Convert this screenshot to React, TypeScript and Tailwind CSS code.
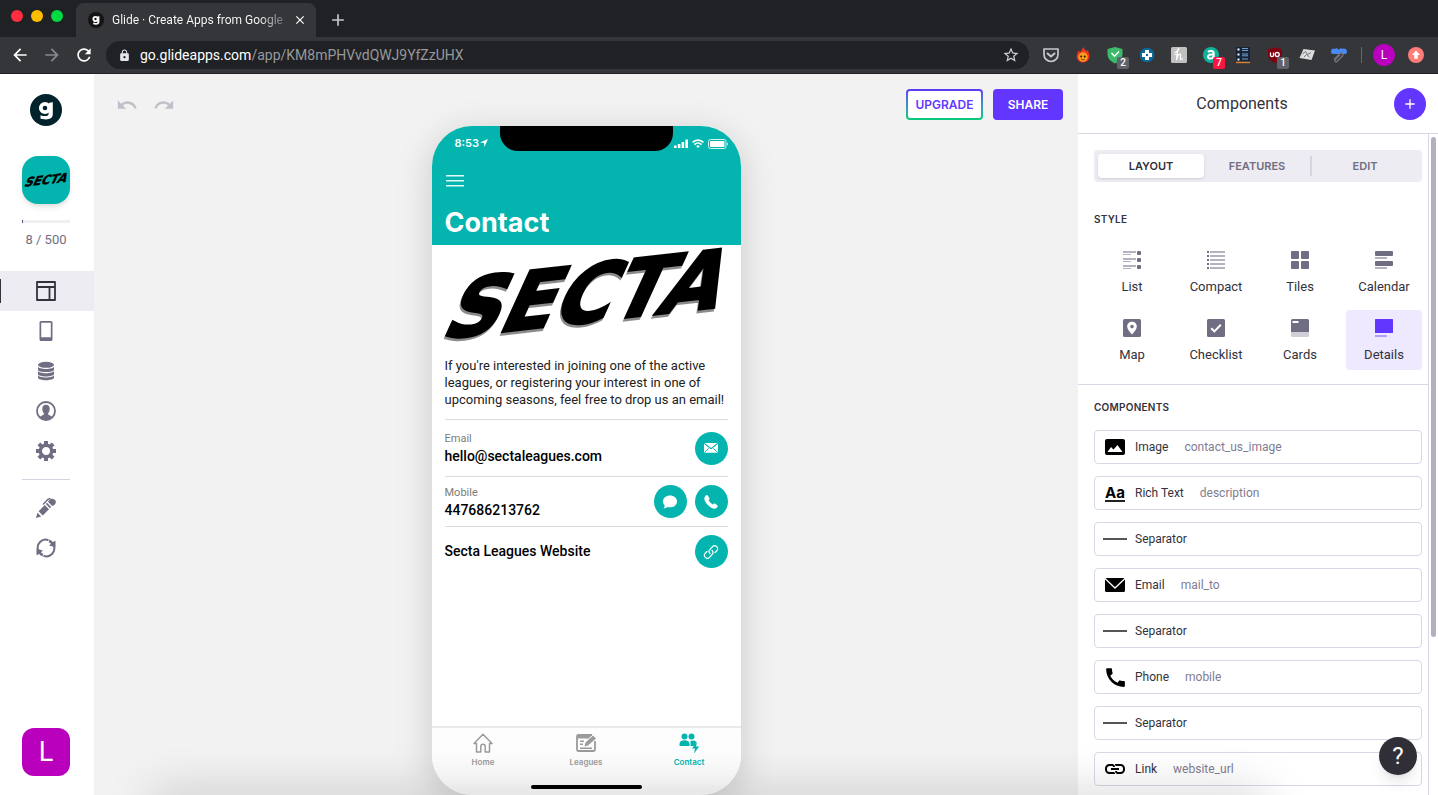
import type { ReactNode } from "react";
import {
  MdArrowBack,
  MdArrowForward,
  MdRefresh,
  MdLock,
  MdStarBorder,
  MdUndo,
  MdRedo,
  MdCall,
  MdClose,
  MdAdd,
} from "react-icons/md";

function SectaLogo({ className, shadow = false }: { className: string; shadow?: boolean }) {
  return (
    <svg viewBox="0 0 284 92" className={`overflow-visible ${className}`} role="img" aria-label="Secta">
      <g
        fontFamily="'DejaVu Sans', sans-serif"
        fontWeight="700"
        fontSize="78"
        strokeWidth="2.500"
        transform="translate(-4 89) rotate(-6.500) skewX(-31)"
      >
        {shadow && (
          <text x="0" y="2.500" fill="#000" stroke="#000" opacity="0.45">
            SECTA
          </text>
        )}
        <text x="0" y="0" fill="#000" stroke="#000">
          SECTA
        </text>
      </g>
    </svg>
  );
}

function GlideMark({ className, fill }: { className: string; fill: string }) {
  return (
    <svg viewBox="0 0 32 32" className={className} role="img" aria-label="Glide">
      <circle cx="16" cy="16" r="16" fill={fill} />
      <circle cx="15" cy="14" r="4.200" fill="none" stroke="#fff" strokeWidth="3.800" />
      <path d="M18.600 10.500c.2-1.600 1.300-2.300 4.200-2.200v11.700c0 3.800-2.700 5.400-7 5.400-2 0-3.900-.3-5.300-.9v-3.300c1.500.6 3.200.9 4.800.9 2.200 0 3.300-.6 3.300-2.300z" fill="#fff" />
    </svg>
  );
}

function Extension({ label, badge, badgeClass, children }: { label: string; badge?: string; badgeClass?: string; children: ReactNode }) {
  return (
    <button aria-label={label} className="relative flex size-5 items-center justify-center">
      <svg viewBox="0 0 18 18" className="size-[18px]">{children}</svg>
      {badge && (
        <span className={`absolute top-3 left-3 flex size-3 items-center justify-center rounded-xs text-[10px] leading-none font-medium text-white ${badgeClass}`}>
          {badge}
        </span>
      )}
    </button>
  );
}

function BrowserBar() {
  return (
    <header className="shrink-0 border-b border-[#202124] bg-[#35363a]">
      <div className="flex h-[37px] items-end bg-[#202124]">
        <div className="flex h-full w-[76px] gap-2 pt-[10px] pl-[11px]">
          <button aria-label="Close window" className="size-3 rounded-full bg-[#ff2d3f]" />
          <button aria-label="Minimise window" className="size-3 rounded-full bg-[#ffbd00]" />
          <button aria-label="Zoom window" className="size-3 rounded-full bg-[#00db41]" />
        </div>
        <div className="flex h-[34px] w-60 items-center rounded-t-lg bg-[#35363a] pr-2 pl-3">
          <GlideMark className="size-4 shrink-0" fill="#141414" />
          <span className="ml-2 min-w-0 flex-1 bg-linear-to-r from-white from-85% to-[#6c6d70] bg-clip-text text-[12px] whitespace-nowrap text-transparent">
            Glide · Create Apps from Google
          </span>
          <button aria-label="Close tab" className="ml-2 flex size-4 items-center justify-center text-white">
            <MdClose className="size-[14px]" />
          </button>
        </div>
        <button aria-label="New tab" className="ml-3 flex h-[34px] w-5 items-center justify-center text-[#c4c7cb]">
          <MdAdd className="size-5" />
        </button>
      </div>
      <div className="flex h-9 items-center">
        <div className="flex gap-3 pl-[10px]">
          <button aria-label="Back" className="text-white"><MdArrowBack className="size-5" /></button>
          <button aria-label="Forward" className="text-[#88898c]"><MdArrowForward className="size-5" /></button>
          <button aria-label="Reload" className="text-white"><MdRefresh className="size-5" /></button>
        </div>
        <div className="ml-3 flex h-7 flex-1 items-center rounded-full bg-[#202124] pr-[9px] pl-3">
          <MdLock className="size-[13px] text-[#e4e5e8]" />
          <a href="#address" className="ml-[9px] flex-1 text-[14px] text-[#97999d]">
            <span className="text-white">go.glideapps.com</span>/app/KM8mPHVvdQWJ9YfZzUHX
          </a>
          <button aria-label="Bookmark" className="text-[#d0d2d6]"><MdStarBorder className="size-[18px]" /></button>
        </div>
        <div className="flex items-center gap-3 pl-3">
          <Extension label="Pocket">
            <path d="M2 3h14v5.500a7 7 0 0 1-14 0z" fill="none" stroke="#c8c9cc" strokeWidth="1.700" strokeLinejoin="round" />
            <path d="m5.500 7.500 3.500 3 3.500-3" fill="none" stroke="#c8c9cc" strokeWidth="2" strokeLinecap="round" strokeLinejoin="round" />
          </Extension>
          <Extension label="Flame">
            <path d="M9.500 1c.3 2 2 2.600 3 4.300l1.500-1.500c-.2 2 1.500 3.500 1.500 6.300 0 4-2.800 6.400-6.500 6.400s-6.300-2.500-6.300-6c0-2.400 1.300-3.800 1.800-6l1.700 1.800C7.200 4.500 8.300 3 9.500 1z" fill="#f0331c" />
            <circle cx="9" cy="11" r="4.700" fill="#f9a01b" />
            <circle cx="7.200" cy="10.500" r="1" fill="#3b1208" />
            <circle cx="10.800" cy="10.500" r="1" fill="#3b1208" />
            <path d="M7 13c1.200 1 2.800 1 4 0" stroke="#a33509" fill="none" />
          </Extension>
          <Extension label="Shield" badge="2" badgeClass="bg-[#5f6368]">
            <path d="M1.500 3 9 1l7.500 2v5c0 4.500-3 7.500-7.500 9.500C4.500 15.500 1.500 12.500 1.500 8z" fill="#3cba6b" />
            <path d="m5.500 7 3 3.200L13 5.500" stroke="#fff" strokeWidth="1.600" fill="none" />
          </Extension>
          <Extension label="Cross">
            <circle cx="9" cy="9" r="7.300" fill="#0d6797" />
            <path d="M7 4h4v3h3v4h-3v3H7v-3H4V7h3z" fill="#fff" />
            <path d="M8 8h2v2H8z" fill="#0d6797" />
          </Extension>
          <Extension label="Honey">
            <rect x="1" y="1" width="16" height="16" rx="1.500" fill="#c1c1c1" />
            <path d="M5 6.500c2-.8 4.300-3 3.800-3.800-.8-.8-1.800 4-2.300 11.300.8-3.500 2-5.800 3.500-5.800 1.600 0-.6 4.800.7 5.300.6.200 1.100-.2 1.600-.8M5 8.500h4" stroke="#fff" strokeWidth="1.200" fill="none" strokeLinecap="round" />
          </Extension>
          <Extension label="Amplify" badge="7" badgeClass="bg-[#f9153f]">
            <circle cx="9" cy="9" r="8" fill="#13b09b" />
            <path d="M6 6c1.500-1.700 5.700-1.500 5.700 1.200V13M11.500 8.500c-3-.3-5.500.3-5.500 2.300 0 2.600 4.700 2.400 5.500-.6" fill="none" stroke="#fff" strokeWidth="2" />
          </Extension>
          <Extension label="Checklist">
            <path d="M2 1h14v14H2z" fill="#152338" />
            <path d="M3.500 2.500h2v2h-2zm0 5h2v2h-2zm0 5h2v2h-2z" fill="#fff" />
            <path d="M8 2.500h6M8 4.500h6M8 8h6M8 9.800h6M8 13h6" stroke="#83b0de" strokeWidth="0.900" />
            <path d="M2 16.500h14" stroke="#d97f30" strokeWidth="1.400" />
          </Extension>
          <Extension label="uBlock Origin" badge="1" badgeClass="bg-[#5f6368]">
            <path d="M9 1c2 1.600 4.500 2 7 2v5c0 5-3.500 7.500-7 9-3.500-1.500-7-4-7-9V3c2.500 0 5-.4 7-2z" fill="#800010" />
            <path d="M4.500 6.500v3c0 1.500 3 1.500 3 0v-3" fill="none" stroke="#fff" strokeWidth="1.300" />
            <circle cx="11.200" cy="8.500" r="2" fill="none" stroke="#fff" strokeWidth="1.300" />
          </Extension>
          <Extension label="Notes">
            <path d="M5.500 3 17 4.500l-3.500 9.500L1.500 12z" fill="#dcdcdc" />
            <path d="m4.500 8 3-2.500 2 3 3.500-2M6 11l2.500-2.500 3 2.500" stroke="#77797c" fill="none" />
          </Extension>
          <Extension label="Link cloud">
            <path d="M1 5.500C1 3 3.500 1.500 5 3c1.200-1.300 2.800-.8 3.500.8L9.500 3c1-1.200 2.700-1 3.200 0C15 1.800 17 3.500 17 6c0 1.300-1 2-2 2H3C1.800 8 1 7 1 5.500z" fill="#488bf5" />
            <path d="m4 13.500 6-6c1.500-1.500 4 .8 2.500 2.500l-5.500 5.500c-1.300 1.200-3-.5-2-1.800l5-5" stroke="#6f7174" strokeWidth="1.500" fill="none" />
          </Extension>
        </div>
        <div className="mr-[11px] ml-3 h-4 w-px bg-[#65676b]" />
        <button aria-label="Profile" className="flex size-[22px] items-center justify-center rounded-full bg-[#b900bd] text-[12px] text-white">L</button>
        <button aria-label="Update" className="mr-[14px] ml-[13px] flex size-4 items-center justify-center rounded-full bg-[#ff7c78]">
          <svg viewBox="0 0 16 16" className="size-4"><path d="m8 3.500 4 4.500h-2.300v3.800H6.300V8H4z" fill="#fff" /></svg>
        </button>
      </div>
    </header>
  );
}

const navItems: { label: string; icon: ReactNode }[] = [
  {
    label: "Layout",
    icon: <path d="M1 1h18v18H1zM1 6h18M13.500 6v13" fill="none" stroke="#33323b" strokeWidth="1.800" strokeLinejoin="round" />,
  },
  {
    label: "App preview",
    icon: <path fillRule="evenodd" d="M5 0h10a1.500 1.500 0 0 1 1.500 1.500v17A1.500 1.500 0 0 1 15 20H5a1.500 1.500 0 0 1-1.500-1.500v-17A1.500 1.500 0 0 1 5 0zm.2 1.800v14.400h9.600V1.800z" />,
  },
  {
    label: "Data",
    icon: (
      <>
        <ellipse cx="10" cy="3.800" rx="8" ry="3" />
        <path d="M2 5.200c0 3.600 16 3.600 16 0v3.200c0 3.600-16 3.600-16 0z" />
        <path d="M2 9.500c0 3.600 16 3.600 16 0v3.200c0 3.600-16 3.600-16 0z" />
        <path d="M2 13.800c0 3.600 16 3.600 16 0v2.700c0 3.600-16 3.600-16 0z" />
      </>
    ),
  },
  {
    label: "Users",
    icon: (
      <>
        <circle cx="10" cy="10" r="9" fill="none" stroke="#706e82" strokeWidth="1.800" />
        <path d="M10 3.700c2.600 0 3.800 1.700 3.700 4.200 0 1.800-.7 3.200-1.600 4.300v1.300l4.200 2.200C14.700 17.600 12.500 18.700 10 18.700s-4.700-1.100-6.300-3l4.200-2.200v-1.300C7 11.100 6.300 9.700 6.300 7.900 6.200 5.400 7.400 3.700 10 3.700z" />
      </>
    ),
  },
  {
    label: "Settings",
    icon: (
      <>
        <circle cx="10" cy="10" r="5.700" fill="none" stroke="#706e82" strokeWidth="3.400" />
        <g stroke="#706e82" strokeWidth="4">
          <path d="M10 0v4M10 16v4M0 10h4M16 10h4M2.900 2.900l2.800 2.800M14.300 14.300l2.800 2.800M17.100 2.900l-2.800 2.800M5.700 14.300l-2.800 2.800" />
        </g>
      </>
    ),
  },
];

function Sidebar() {
  return (
    <nav className="flex w-[94px] shrink-0 flex-col bg-white">
      <div className="flex flex-col items-center pt-5 pr-0.5">
        <GlideMark className="size-8" fill="#02232b" />
        <a href="#app" aria-label="Secta app" className="mt-[30px] flex size-12 items-center justify-center rounded-2xl bg-[#03b5ae] shadow-md">
          <SectaLogo className="w-11" />
        </a>
        <div className="mt-4 h-[3px] w-12 bg-[#f0f0f2]"><div className="h-full w-px bg-[#4b6075]" /></div>
        <span className="mt-[7px] text-[13px] leading-5 text-[#706e82]">8 / 500</span>
      </div>
      <div className="mt-[21px]">
        {navItems.map((item, i) => (
          <button
            key={item.label}
            aria-label={item.label}
            className={`relative flex h-10 w-full items-center justify-center pr-0.5 ${i === 0 ? "bg-[#edecf3]" : "bg-white"}`}
          >
            {i === 0 && <span className="absolute top-2 left-0 h-6 w-px bg-[#33323b]" />}
            <svg viewBox="0 0 20 20" className="size-5" fill="#706e82">{item.icon}</svg>
          </button>
        ))}
      </div>
      <div className="mt-2 flex flex-col items-center pr-0.5">
        <div className="mb-2 h-px w-12 bg-[#d6d4e2]" />
        <button aria-label="Edit styles" className="flex h-10 w-full items-center justify-center">
          <svg viewBox="0 0 20 20" className="size-5" fill="#706e82">
            <path d="m0 20 1.400-5.200 3.800 3.800z" />
            <path d="m2.600 13.200 6.200-6.200 4.200 4.200L6.800 17.400z" />
            <path d="m9.800 6 1.200-1.200 4.200 4.200L14 10.200z" />
            <path d="M12 3.800c1.200-2.200 3-3.300 5.200-2.900 1.600.3 3 1.900 2.600 3.600-.4 1.900-1.700 2.700-3.600 3.500z" />
            <path d="M7 6.500 12 1.200c.8-.6 1.700-.5 2.600 0" fill="none" stroke="#706e82" strokeWidth="1.500" />
          </svg>
        </button>
        <button aria-label="Sync data" className="flex h-10 w-full items-center justify-center">
          <svg viewBox="0 0 20 20" className="size-5" fill="#706e82">
            <path d="M2.200 12.500A8 8 0 0 1 12.500 2.200M17.800 7.500A8 8 0 0 1 7.500 17.800" fill="none" stroke="#706e82" strokeWidth="2" />
            <path d="M13.500 1.400A9 9 0 0 1 16.800 4L19.500 2.800v6.400l-6.500-1.800 2-1.600a7 7 0 0 0-2.200-1.600zM6.500 18.600A9 9 0 0 1 3.200 16L.5 17.200v-6.400L7 12.600l-2 1.600a7 7 0 0 0 2.200 1.600z" />
          </svg>
        </button>
      </div>
      <div className="mt-auto flex justify-center pr-0.5 pb-[19px]">
        <button aria-label="Account" className="flex size-12 items-center justify-center rounded-[12px] bg-[#b900bd] text-[27px] text-white">L</button>
      </div>
    </nav>
  );
}

function RoundAction({ label, children }: { label: string; children: ReactNode }) {
  return (
    <button aria-label={label} className="flex size-[33px] items-center justify-center rounded-full bg-[#03b5ae]">
      <svg viewBox="0 0 16 16" className="size-4" fill="#fff">{children}</svg>
    </button>
  );
}

function PhoneTab({ label, active = false, children }: { label: string; active?: boolean; children: ReactNode }) {
  return (
    <button className={`flex flex-1 flex-col items-center pt-[5px] font-['Inter',sans-serif] text-[8px] leading-3 font-semibold ${active ? "text-[#03b5ae]" : "text-[#9b9b9b]"}`}>
      <svg viewBox="0 0 20 20" className="mb-[3px] size-5" fill="currentColor">{children}</svg>
      {label}
    </button>
  );
}

function Phone() {
  return (
    <section aria-label="App preview" className="flex w-[309px] flex-1 flex-col overflow-hidden rounded-[40px] bg-white text-black shadow-[0_8px_36px_rgba(0,0,0,0.17)]">
      <div className="h-[119px] shrink-0 bg-[#03b5ae] font-['Inter',sans-serif] text-white">
        <div className="flex h-[34px] items-start justify-between">
          <div className="flex w-[68px] items-center gap-px pt-[10px] pl-[23px] text-[11px] leading-[14px] font-semibold">
            8:53
            <svg viewBox="0 0 10 10" className="size-2 shrink-0" fill="#fff"><path d="M10 0 5.500 10 5 5 0 4.500z" /></svg>
          </div>
          <div className="h-[25px] w-[173px] rounded-b-[18px] bg-black" />
          <div className="flex w-[68px] items-center gap-1 pt-[13px] pl-px">
            <svg viewBox="0 0 14 10" className="h-[10px] w-[14px]" fill="#fff">
              <rect x="0" y="6.500" width="2.600" height="2.500" /><rect x="3.800" y="5" width="2.600" height="4" /><rect x="7.600" y="3" width="2.600" height="6" /><rect x="11.400" y="0.500" width="2.600" height="8.500" />
            </svg>
            <svg viewBox="0 0 12 10" className="h-[10px] w-3" fill="none" stroke="#fff" strokeWidth="1.700">
              <path d="M.6 3.400a7.600 7.600 0 0 1 10.800 0M2.500 5.600a5 5 0 0 1 7 0" /><path d="M4.200 7.200 6 9l1.800-1.800a2.600 2.600 0 0 0-3.600 0z" fill="#fff" stroke="none" />
            </svg>
            <svg viewBox="0 0 20 10" className="h-[10px] w-5" fill="none">
              <rect x="0.500" y="0.500" width="17.500" height="9" rx="2" stroke="#d6f4f2" /><rect x="2" y="2" width="14.500" height="6" rx="0.800" fill="#fff" /><path d="M19 3.500c1 .4 1 2.600 0 3z" fill="#fff" />
            </svg>
          </div>
        </div>
        <button aria-label="Open menu" className="mt-[15px] ml-[14px] block h-3 w-[18px]">
          <svg viewBox="0 0 18 12" className="h-3 w-[18px]"><path d="M0 .7h18M0 5.700h18M0 10.700h18" stroke="#e6f8f7" strokeWidth="1.400" /></svg>
        </button>
        <h1 className="mt-[18px] ml-[13px] text-[27px] leading-9 font-bold">Contact</h1>
      </div>
      <div className="flex flex-1 flex-col px-[13px]">
        <div className="-mx-0.5 h-[105px] pt-1"><SectaLogo className="w-full" shadow /></div>
        <p className="mt-[7px] mb-[11px] text-[13px] leading-[17px] whitespace-nowrap text-[#222]">
          If you're interested in joining one of the active<br />
          leagues, or registering your interest in one of<br />
          upcoming seasons, feel free to drop us an email!
        </p>
        <div className="flex h-[57px] items-center justify-between border-t border-[#dcdcdc]">
          <div>
            <div className="text-[11px] leading-4 text-[#7b7b7b]">Email</div>
            <div className="text-[14px] leading-[18px] font-medium">hello@sectaleagues.com</div>
          </div>
          <RoundAction label="Send email">
            <path d="M1 3.500 8 9l7-5.500v9.300H1z" /><path d="M1.600 3h12.800L8 8z" />
            <path d="m1.200 12.700 4.600-4.500M14.800 12.700l-4.600-4.500M1 3.300l7 5.600 7-5.600" fill="none" stroke="#03b5ae" strokeWidth="0.900" />
          </RoundAction>
        </div>
        <div className="flex h-[50px] items-center justify-between border-t border-[#dcdcdc]">
          <div>
            <div className="text-[11px] leading-4 text-[#7b7b7b]">Mobile</div>
            <div className="text-[14px] leading-[18px] font-medium">447686213762</div>
          </div>
          <div className="flex gap-2">
            <RoundAction label="Send message">
              <path d="M8 1.500c4 0 7 2.600 7 5.900s-3 5.900-7 5.900c-1 0-1.800-.1-2.700-.4-1 .8-2 1.300-3.800 1.500.8-1 1.200-1.900 1.100-3.200C1.600 10.200 1 8.900 1 7.400c0-3.300 3-5.900 7-5.900z" />
            </RoundAction>
            <RoundAction label="Call">
              <path d="M2.200 2.200C3.500.6 4.400.9 5.300 2.300l1 1.600c.6 1-.2 1.600-.8 2.200 1 1.900 2.400 3.300 4.300 4.300.6-.6 1.200-1.400 2.200-.8l1.600 1.100c1.400.9 1.700 1.700.2 3-1.400 1.300-3.300 1.300-5.400.1-2.900-1.600-4.700-3.500-6.200-6.300-1.100-2.100-1.200-3.900 0-5.300z" />
            </RoundAction>
          </div>
        </div>
        <div className="flex h-[50px] items-center justify-between border-t border-[#dcdcdc]">
          <div className="text-[14px] font-medium">Secta Leagues Website</div>
          <RoundAction label="Open website">
            <g fill="none" stroke="#fff" strokeWidth="1.200" strokeLinecap="round">
              <path d="M7 9.500a3 3 0 0 1 0-4.200L9.800 2.300a3 3 0 0 1 4.200 4.200l-2 2" /><path d="M9 6.500a3 3 0 0 1 0 4.200l-2.800 3A3 3 0 0 1 2 9.500l2-2" />
            </g>
          </RoundAction>
        </div>
      </div>
      <div className="flex h-[59px] shrink-0 border-t-2 border-[#e9e9e9] bg-[#fdfdfd]">
        <PhoneTab label="Home">
          <path d="M1 10.500 10 1.200l9 9.300h-2.500V19h-4.300v-5.500a2.200 2.200 0 0 0-4.400 0V19H3.500v-8.500z" fill="none" stroke="currentColor" strokeWidth="1.500" strokeLinejoin="round" />
        </PhoneTab>
        <PhoneTab label="Leagues">
          <path d="M19 8v8.500a1.500 1.500 0 0 1-1.500 1.500h-15A1.500 1.500 0 0 1 1 16.500v-13A1.500 1.500 0 0 1 2.500 2H16" fill="none" stroke="currentColor" strokeWidth="1.800" />
          <path d="M1 2h15l-3.300 3.500H1zM4 7.500h4V9H4zm0 3h3V12H4zM8.500 13.500l1-4 7.500-7 3 3-8 7zM4 14.500h12V16H4z" />
        </PhoneTab>
        <PhoneTab label="Contact" active>
          <circle cx="5.500" cy="3.500" r="3" /><circle cx="12.500" cy="3.500" r="3" />
          <path d="M.5 13v-2c0-2.500 1.800-3.800 5-3.800s5 1.300 5 3.800v2zM11.500 13V8c3-1.200 5.500-.3 5.900 1.500L14.500 13zM17.800 8.500l-4.800 7h3L15 20.500l5.200-7h-3z" />
        </PhoneTab>
      </div>
      <div className="flex h-[10px] shrink-0 items-start justify-center bg-[#fbfbfb]"><div className="h-1 w-[111px] rounded-full bg-black" /></div>
    </section>
  );
}

function Canvas() {
  return (
    <main className="flex min-w-0 flex-1 flex-col items-center bg-[#f2f2f2]">
      <div className="flex h-[52px] w-full shrink-0 items-start justify-between pt-[15px] pr-[15px] pl-[22px]">
        <div className="flex gap-[15px] pt-[5px] text-[#c0bfca]">
          <button aria-label="Undo"><MdUndo className="size-[22px]" /></button>
          <button aria-label="Redo"><MdRedo className="size-[22px]" /></button>
        </div>
        <div className="flex gap-[10px] font-['Inter',sans-serif] text-[12px] leading-none font-semibold">
          <button className="h-[31px] w-[77px] rounded-[4px] bg-linear-to-b from-[#5a35f5] to-[#00cb78] p-0.5 text-[#6236ff]">
            <span className="flex h-full items-center justify-center rounded-xs bg-white">UPGRADE</span>
          </button>
          <button className="h-[31px] w-[70px] rounded-[4px] bg-[#6236ff] text-white">SHARE</button>
        </div>
      </div>
      <Phone />
    </main>
  );
}

const styles: { label: string; icon: ReactNode }[] = [
  {
    label: "List",
    icon: (
      <>
        <path d="M0 1h13M0 8h13M0 15h13" stroke="#b5b3c1" strokeWidth="1.800" /><path d="M0 3.500h8M0 10.500h8M0 17.500h8" stroke="#b5b3c1" strokeWidth="1" />
        <rect x="14" y="0" width="4" height="4" rx="1" /><rect x="14" y="7" width="4" height="4" rx="1" /><rect x="14" y="14" width="4" height="4" rx="1" />
      </>
    ),
  },
  {
    label: "Compact",
    icon: (
      <>
        <path d="M3 1h15M3 5h15M3 9h15M3 13h15M3 17h15" stroke="#b5b3c1" strokeWidth="1.800" />
        <path d="M0 0h2v2H0zm0 4h2v2H0zm0 4h2v2H0zm0 4h2v2H0zm0 4h2v2H0z" />
      </>
    ),
  },
  {
    label: "Tiles",
    icon: <><rect width="8" height="8" rx="1" /><rect x="10" width="8" height="8" rx="1" /><rect y="10" width="8" height="8" rx="1" /><rect x="10" y="10" width="8" height="8" rx="1" /></>,
  },
  {
    label: "Calendar",
    icon: <><rect width="18" height="5" rx="1" /><rect y="10" width="18" height="5" rx="1" /><path d="M0 7h12M0 17h12" stroke="#b5b3c1" strokeWidth="1.800" /></>,
  },
  {
    label: "Map",
    icon: <><rect width="18" height="18" rx="1.500" /><path fillRule="evenodd" d="M9 2.800c2.700 0 4.800 2 4.800 4.700C13.800 10.800 9 15.500 9 15.500S4.200 10.800 4.200 7.500c0-2.700 2.100-4.700 4.800-4.700zm0 3A1.800 1.800 0 1 0 9 9.400 1.800 1.800 0 0 0 9 5.800z" fill="#fff" /></>,
  },
  {
    label: "Checklist",
    icon: <><rect width="18" height="18" rx="1.500" /><path d="m4.200 9.200 3.200 3.200 6.400-6.600" fill="none" stroke="#fff" strokeWidth="2" /></>,
  },
  {
    label: "Cards",
    icon: <><path d="M0 12h18v4.500a1.500 1.500 0 0 1-1.500 1.500h-15A1.500 1.500 0 0 1 0 16.500z" fill="#d0cfd8" /><path d="M1.500 0h15A1.500 1.500 0 0 1 18 1.500V13H0V1.500A1.500 1.500 0 0 1 1.500 0z" /><path d="M1.500 3h6" stroke="#fff" strokeWidth="2" /></>,
  },
  {
    label: "Details",
    icon: <><rect width="18" height="14" rx="0.500" fill="#6236ff" /><path d="M0 17h12" stroke="#b19bff" strokeWidth="2" /></>,
  },
];

const separator = <svg viewBox="0 0 24 24" className="size-6"><path d="M0 12h24" stroke="#555" strokeWidth="2" /></svg>;

const rows: { label: string; value?: string; icon: ReactNode }[] = [
  {
    label: "Image",
    value: "contact_us_image",
    icon: <svg viewBox="0 0 24 24" className="size-6"><rect x="2" y="4" width="20" height="16" rx="2" /><path d="m4.500 17 3.500-5 2.500 2.500L14.500 10l5 7z" fill="#fff" /></svg>,
  },
  {
    label: "Rich Text",
    value: "description",
    icon: <span aria-hidden="true" className="border-b-2 border-[#222] font-['Inter',sans-serif] text-[15px] leading-[15px] font-bold text-black">Aa</span>,
  },
  { label: "Separator", icon: separator },
  {
    label: "Email",
    value: "mail_to",
    icon: <svg viewBox="0 0 24 24" className="size-6"><rect x="2" y="5" width="20" height="14" rx="1.500" /><path d="m2 5.500 10 9.500 10-9.500" fill="none" stroke="#fff" strokeWidth="1.300" /></svg>,
  },
  { label: "Separator", icon: separator },
  { label: "Phone", value: "mobile", icon: <MdCall className="size-[25px] shrink-0 text-black" /> },
  { label: "Separator", icon: separator },
  {
    label: "Link",
    value: "website_url",
    icon: <svg viewBox="0 0 24 24" className="size-6"><path d="M11 15.500V16H6.500A3.500 3.500 0 0 1 3 12.500v-1A3.500 3.500 0 0 1 6.500 8h3A2 2 0 0 1 11 10M13 8.500V8h4.500a3.500 3.500 0 0 1 3.500 3.500v1a3.500 3.500 0 0 1-3.500 3.500h-3a2 2 0 0 1-1.500-2M8 12h8" fill="none" stroke="#000" strokeWidth="2" /></svg>,
  },
];

function ComponentsPanel() {
  return (
    <aside className="flex w-[360px] shrink-0 flex-col bg-white text-[#33323b]">
      <div className="flex h-[60px] shrink-0 items-center gap-1 border-b border-[#d9d7e6] pr-3 pl-4">
        <h2 className="flex-1 text-center text-[16px]">Components</h2>
        <button aria-label="Add component" className="flex size-8 items-center justify-center rounded-full bg-[#6236ff] text-white"><MdAdd className="size-4" /></button>
      </div>
      <div className="flex min-h-0 flex-1">
        <div className="min-w-0 flex-1 overflow-hidden">
          <div className="border-b border-[#d9d7e6] pt-4 pr-[6px] pb-[14px] pl-4">
            <div role="tablist" className="flex h-8 items-center rounded-[4px] bg-[#edecf3] p-1 font-['Inter',sans-serif] text-[11px] font-semibold text-[#706e82]">
              <button role="tab" aria-selected="true" className="h-6 flex-1 rounded-[4px] bg-white text-[#33323b] shadow-sm">LAYOUT</button>
              <button role="tab" aria-selected="false" className="h-5 flex-1 border-r-2 border-[#d6d5df]">FEATURES</button>
              <button role="tab" aria-selected="false" className="h-6 flex-1">EDIT</button>
            </div>
            <h3 className="mt-[29px] font-['Inter',sans-serif] text-[10px] leading-4 font-semibold tracking-wide">STYLE</h3>
            <div className="mt-[15px] grid grid-cols-4 gap-2">
              {styles.map((s) => (
                <button key={s.label} className={`flex h-[60px] flex-col items-center rounded-[4px] pt-[9px] text-[13px] leading-5 ${s.label === "Details" ? "bg-[#eee9ff]" : ""}`}>
                  <svg viewBox="0 0 18 18" className="mb-2 size-[18px]" fill="#706e82">{s.icon}</svg>
                  {s.label}
                </button>
              ))}
            </div>
          </div>
          <div className="pt-[14px] pr-[6px] pl-4">
            <h3 className="font-['Inter',sans-serif] text-[10px] leading-4 font-semibold tracking-wide">COMPONENTS</h3>
            <div className="mt-[15px] flex flex-col gap-3">
              {rows.map((r, i) => (
                <button key={i} className="flex h-[34px] items-center rounded-[4px] border border-[#d9d7e6] bg-white pl-2 text-[12px]">
                  <span className="flex w-6 items-center justify-center">{r.icon}</span>
                  <span className="ml-2">{r.label}</span>
                  {r.value && <span className="ml-4 text-[#7f7d91]">{r.value}</span>}
                </button>
              ))}
            </div>
          </div>
        </div>
        <div className="w-[10px] border-l border-[#d9d7e6] pt-[3px] pl-0.5"><div className="h-[76%] w-[5px] rounded-full bg-[#b3b0c1]" /></div>
      </div>
    </aside>
  );
}

export default function App() {
  return (
    <div className="relative flex h-screen flex-col overflow-hidden bg-white font-['Roboto',sans-serif]">
      <BrowserBar />
      <div className="flex min-h-0 flex-1">
        <Sidebar />
        <Canvas />
        <ComponentsPanel />
      </div>
      <div className="pointer-events-none absolute right-[170px] -bottom-5 left-[150px] h-5 rounded-full shadow-[0_0_46px_rgba(0,0,0,0.25)]" />
      <button className="absolute right-[21px] bottom-5 flex size-[38px] items-center justify-center rounded-full bg-[#302f38] text-[24px] text-white shadow-lg" aria-label="Help">?</button>
    </div>
  );
}
